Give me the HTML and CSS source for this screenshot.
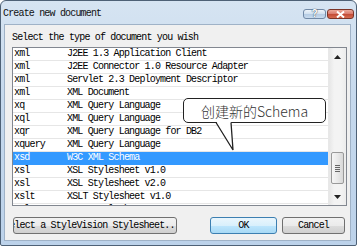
FILE: index.html
```html
<!DOCTYPE html>
<html>
<head>
<meta charset="utf-8">
<link rel="stylesheet" href="styles.css">
</head>
<body>
<div class="window">
  <div class="titlebar">
    <span class="title">Create new document</span>
    <div class="caption-btns">
      <span class="cbtn help">?</span>
      <span class="cbtn close">
        <svg width="9" height="7" viewBox="0 0 9 7"><path d="M1 0.5 L8 6.5 M8 0.5 L1 6.5" stroke="#fff" stroke-width="2"/></svg>
      </span>
    </div>
  </div>
  <div class="client">
    <div class="label">Select the type of document you wish</div>
    <div class="listbox">
      <div class="rows">
        <div class="row"><span class="ext">xml</span><span class="desc">J2EE 1.3 Application Client</span></div>
        <div class="row"><span class="ext">xml</span><span class="desc">J2EE Connector 1.0 Resource Adapter</span></div>
        <div class="row"><span class="ext">xml</span><span class="desc">Servlet 2.3 Deployment Descriptor</span></div>
        <div class="row"><span class="ext">xml</span><span class="desc">XML Document</span></div>
        <div class="row"><span class="ext">xq</span><span class="desc">XML Query Language</span></div>
        <div class="row"><span class="ext">xql</span><span class="desc">XML Query Language</span></div>
        <div class="row"><span class="ext">xqr</span><span class="desc">XML Query Language for DB2</span></div>
        <div class="row"><span class="ext">xquery</span><span class="desc">XML Query Language</span></div>
        <div class="row selected"><span class="ext">xsd</span><span class="desc">W3C XML Schema</span></div>
        <div class="row"><span class="ext">xsl</span><span class="desc">XSL Stylesheet v1.0</span></div>
        <div class="row"><span class="ext">xsl</span><span class="desc">XSL Stylesheet v2.0</span></div>
        <div class="row"><span class="ext">xslt</span><span class="desc">XSLT Stylesheet v1.0</span></div>
        <div class="row"><span class="ext">xslt</span><span class="desc">XSLT Stylesheet v2.0</span></div>
      </div>
      <div class="scrollbar">
        <div class="sb-btn"><svg width="7" height="4" viewBox="0 0 7 4"><path d="M0 4 L3.5 0 L7 4 Z" fill="#222"/></svg></div>
        <div class="track">
          <div class="thumb"><span class="grip"></span><span class="grip"></span><span class="grip"></span><span class="grip"></span></div>
        </div>
        <div class="sb-btn"><svg width="7" height="4" viewBox="0 0 7 4"><path d="M0 0 L7 0 L3.5 4 Z" fill="#222"/></svg></div>
      </div>
    </div>
    <div class="buttons">
      <button class="btn sv"><span class="sv-text">Select a StyleVision Stylesheet...</span></button>
      <button class="btn ok">OK</button>
      <button class="btn cancel">Cancel</button>
    </div>
  </div>
  <div class="callout">创建新的Schema</div>
  <svg class="tail" width="24" height="32" viewBox="0 0 24 32">
    <polygon points="2,0 17,0 19,29" fill="#fff"/>
    <path d="M2 1.5 L19 29 L17 1.5" fill="none" stroke="#222" stroke-width="1.3"/>
  </svg>
</div>
</body>
</html>
```

FILE: styles.css
```css
html, body {
  margin: 0;
  padding: 0;
  background: #ffffff;
}

.window {
  position: relative;
  width: 357px;
  height: 246px;
  box-sizing: border-box;
  border: 1px solid #4e6176;
  border-radius: 6px 6px 2px 2px;
  background: linear-gradient(to bottom, #d6e4f2 0%, #c6d9ed 40%, #bcd2ea 100%);
  display: flex;
  flex-direction: column;
  overflow: hidden;
  font-family: "Liberation Mono", monospace;
  font-size: 10px;
  letter-spacing: -0.83px;
  color: #000;
}

.titlebar {
  height: 23px;
  flex: none;
  display: flex;
  align-items: flex-start;
}

.title {
  padding: 7px 0 0 2px;
  line-height: 12px;
  color: #111;
}

.caption-btns {
  margin: 8px 2px 0 auto;
  display: flex;
  gap: 1px;
}

.cbtn {
  height: 10px;
  box-sizing: border-box;
  border-radius: 3px;
  display: flex;
  align-items: center;
  justify-content: center;
  letter-spacing: 0;
}

.help {
  width: 23px;
  border: 1px solid #7189a6;
  background: linear-gradient(to bottom, #eef4fa 0%, #d1e0ef 50%, #b4cbe3 51%, #c9dbee 100%);
  color: #fff;
  font-family: "Liberation Sans", sans-serif;
  font-weight: bold;
  font-size: 10px;
  line-height: 8px;
  text-shadow: 0 0 1px #3b4f66, 0 0 1px #3b4f66;
}

.close {
  width: 27px;
  border: 1px solid #7b3528;
  background: linear-gradient(to bottom, #ecaa9b 0%, #d9786a 50%, #c24a35 51%, #d66a4f 100%);
}

.client {
  flex: 1;
  margin: 0 5px 4px 3px;
  background: #f0f0f0;
  border: 1px solid #9fb2c7;
  display: flex;
  flex-direction: column;
}

.label {
  margin: 7px 0 0 7px;
  line-height: 12px;
  height: 12px;
}

.listbox {
  margin: 3px 0 0 7px;
  width: 335px;
  height: 159px;
  box-sizing: border-box;
  border: 1px solid #828790;
  background: #fff;
  display: flex;
  overflow: hidden;
}

.rows {
  flex: 1;
  overflow: hidden;
}

.row {
  height: 13px;
  box-sizing: border-box;
  border-bottom: 1px solid #e6e6e6;
  display: flex;
  align-items: center;
  line-height: 12px;
  white-space: nowrap;
}

.ext {
  width: 53px;
  padding-left: 1px;
  flex: none;
}

.row.selected {
  background: #3399ff;
  border-bottom-color: #3399ff;
  color: #fff;
}

.scrollbar {
  width: 17px;
  flex: none;
  display: flex;
  flex-direction: column;
  background: linear-gradient(to right, #e6e6e6 0%, #f3f3f3 30%, #f3f3f3 70%, #ececec 100%);
  border-left: 1px solid #e8e8e8;
}

.sb-btn {
  height: 17px;
  flex: none;
  display: flex;
  align-items: center;
  justify-content: center;
}

.track {
  flex: 1;
  display: flex;
  flex-direction: column;
  align-items: center;
}

.thumb {
  margin-top: 87px;
  width: 13px;
  height: 32px;
  box-sizing: border-box;
  border: 1px solid #999;
  border-radius: 2px;
  background: linear-gradient(to right, #f6f6f6 0%, #e9e9e9 50%, #d8d8d8 100%);
  display: flex;
  flex-direction: column;
  align-items: center;
  justify-content: center;
  gap: 1px;
}

.grip {
  width: 5px;
  height: 1px;
  background: #666;
}

.buttons {
  margin: 11px 5px 0 8px;
  display: flex;
  gap: 5px;
}

.btn {
  height: 17px;
  box-sizing: border-box;
  border: 1px solid #707070;
  border-radius: 3px;
  background: linear-gradient(to bottom, #f2f2f2 0%, #ebebeb 50%, #dddddd 51%, #cfcfcf 100%);
  font-family: "Liberation Mono", monospace;
  font-size: 10px;
  letter-spacing: -0.83px;
  color: #000;
  padding: 0;
  margin: 0;
  line-height: 12px;
  white-space: nowrap;
  overflow: hidden;
}

.sv {
  width: 164px;
  text-align: left;
  margin-right: auto;
}

.sv-text {
  display: block;
  margin-left: -10px;
}

.ok {
  width: 67px;
  border-color: #3c7fb1;
  background: linear-gradient(to bottom, #eaf6fd 0%, #d9f0fc 50%, #bee6fd 51%, #a7d9f5 100%);
}

.cancel {
  width: 63px;
}

.callout {
  position: absolute;
  left: 182px;
  top: 97px;
  width: 143px;
  height: 25px;
  box-sizing: border-box;
  border: 1.3px solid #222;
  border-radius: 5px;
  background: #fff;
  font-family: "Noto Sans CJK SC", "Noto Sans", sans-serif;
  font-weight: 300;
  font-size: 14px;
  letter-spacing: 0;
  color: #333;
  display: flex;
  align-items: center;
  justify-content: center;
  line-height: 16px;
}

.tail {
  position: absolute;
  left: 213px;
  top: 120px;
}
```
